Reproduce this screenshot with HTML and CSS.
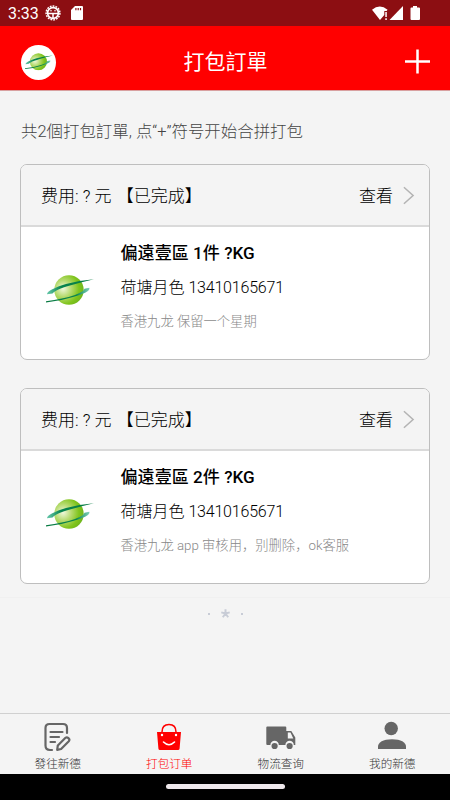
FILE: index.html
```
<!DOCTYPE html>
<html lang="zh-CN">
<head>
<meta charset="utf-8">
<title>打包訂單</title>
<link rel="stylesheet" href="styles.css">
</head>
<body>
<svg class="defs" aria-hidden="true">
  <defs>
    <radialGradient id="ball" cx=".3" cy=".45" r=".72">
      <stop offset="0" stop-color="#f0f8dc"/>
      <stop offset=".4" stop-color="#b4da6c"/>
      <stop offset=".75" stop-color="#80c41c"/>
      <stop offset="1" stop-color="#6cb41c"/>
    </radialGradient>
    <linearGradient id="ringTop"><stop offset="0" stop-color="#68c8ac"/><stop offset=".3" stop-color="#08854f"/><stop offset="1" stop-color="#087a42"/></linearGradient>
    <linearGradient id="ringLow"><stop offset="0" stop-color="#087a42"/><stop offset=".7" stop-color="#08854f"/><stop offset="1" stop-color="#80d0bc"/></linearGradient>
    <symbol id="logo" viewBox="0 0 48 30">
      <circle cx="23" cy="15" r="14.700" fill="url(#ball)"/>
      <path d="M1 19.200C1 16 9 12.500 20 9Q33 5.500 48 4.200Q35 7.200 24 10.500C14 13.500 9 15.500 6.500 18.600Z" fill="url(#ringTop)"/>
      <path d="M0 26.300Q17 24 29 20Q38 16.500 38.500 13.800L43.300 12.800C45 16 36 19.500 27 22.100Q14 26.300 0 27.500Z" fill="url(#ringLow)"/>
    </symbol>
  </defs>
</svg>
<div class="screen">
  <div class="status">
    <span class="time">3:33</span>
    <svg class="gear" viewBox="0 0 16 16">
      <circle cx="8" cy="8" r="6.900" fill="none" stroke="#fff" stroke-width="1.500" stroke-dasharray="1.800 1.100"/>
      <circle cx="8" cy="8" r="5.400" fill="none" stroke="#fff" stroke-width="1.700"/>
      <path d="M3 8.500H13M8 8.500V13" stroke="#fff" stroke-width="1.500"/>
      <circle cx="6" cy="5.800" r=".8" fill="#fff"/><circle cx="10" cy="5.800" r=".8" fill="#fff"/>
    </svg>
    <svg class="sd" viewBox="0 0 12 14"><path fill="#fff" fill-rule="evenodd" d="M4 0H11Q12 0 12 1V13Q12 14 11 14H1Q0 14 0 13V4ZM4.300 2V4.300H5.500V2ZM6.600 2V4.300H7.800V2ZM8.900 2V4.300H10.100V2Z"/></svg>
    <svg class="signals" viewBox="0 0 48 15">
      <path fill="#fff" d="M0 3.800Q7.800-2.800 15.600 3.800L14.600 5H12.300V9L8 14Z"/>
      <path fill="#fff" d="M13.300 6H14.800V11H13.300ZM13.300 12.300H14.800V14H13.300Z"/>
      <path fill="#fff" d="M31 0V14H17.500Z"/>
      <path fill="#fff" d="M41 0H45V1.500H47Q48 1.500 48 2.500V13Q48 14 47 14H39.500Q38.500 14 38.500 13V2.500Q38.500 1.500 39.500 1.500H41Z"/>
    </svg>
  </div>
  <header class="header">
    <span class="avatar"><svg class="avatar-logo"><use href="#logo"/></svg></span>
    <h1>打包訂單</h1>
    <svg class="plus" viewBox="0 0 25 25"><path d="M0 12.500H25M12.500 .5V24.500" stroke="#fff" stroke-width="2.500"/></svg>
  </header>
  <main class="content">
    <p class="notice">共2個打包訂單, 点“+”符号开始合拼打包</p>
    <section class="card">
      <div class="card-head">
        <span class="fee">费用: ? 元 <span class="state">【已完成】</span></span>
        <span class="view">查看</span>
        <svg class="chevron" viewBox="0 0 12 20"><path d="M1 1L11 10L1 19" fill="none" stroke="#b4b4b4" stroke-width="1.700"/></svg>
      </div>
      <div class="card-body">
        <svg class="logo"><use href="#logo"/></svg>
        <div class="info">
          <h2>偏遠壹區 1件 ?KG</h2>
          <p class="person">荷塘月色 <span class="phone">13410165671</span></p>
          <p class="address">香港九龙 保留一个星期</p>
        </div>
      </div>
    </section>
    <section class="card">
      <div class="card-head">
        <span class="fee">费用: ? 元 <span class="state">【已完成】</span></span>
        <span class="view">查看</span>
        <svg class="chevron" viewBox="0 0 12 20"><path d="M1 1L11 10L1 19" fill="none" stroke="#b4b4b4" stroke-width="1.700"/></svg>
      </div>
      <div class="card-body">
        <svg class="logo"><use href="#logo"/></svg>
        <div class="info">
          <h2>偏遠壹區 2件 ?KG</h2>
          <p class="person">荷塘月色 <span class="phone">13410165671</span></p>
          <p class="address">香港九龙 app 审核用，别删除，ok客服</p>
        </div>
      </div>
    </section>
    <div class="end"><i></i><svg viewBox="0 0 10 10"><path d="M5 5V.3M5 5L9.700 3.700M5 5L8 9.200M5 5L2 9.200M5 5L.3 3.700" stroke="#c8ccd6" stroke-width="2.200"/></svg><i></i></div>
  </main>
  <nav class="tabs">
    <a class="tab">
      <svg viewBox="0 0 28 28" fill="none" stroke="#666" stroke-width="2.200" stroke-linecap="round" stroke-linejoin="round">
        <path d="M8 27H6Q1.500 27 1.500 22.500V5Q1.500 1 5.500 1H19Q23 1 23 5V10"/>
        <path d="M6.500 9H18.500M6.500 14H15M6.500 19H11"/>
        <path d="M13.200 26.800L13.800 22.500L21.500 14.800Q22.800 13.700 24.100 14.900L24.800 15.600Q26 16.900 24.800 18.200L17.100 26Z"/>
      </svg>
      <span>發往新德</span>
    </a>
    <a class="tab active">
      <svg viewBox="0 0 28 28"><path fill="red" d="M2 9H26L24.600 25.500Q24.500 27 23 27H5Q3.500 27 3.400 25.500Z"/><path d="M7 12V9Q7 1.500 14 1.500T21 9V12" fill="none" stroke="red" stroke-width="1.500"/><circle cx="7" cy="12" r="1.200" fill="#fff"/><circle cx="21" cy="12" r="1.200" fill="#fff"/><path d="M8.500 19Q14 24.500 19.500 19" fill="none" stroke="#fff" stroke-width="1.600" stroke-linecap="round"/></svg>
      <span>打包订单</span>
    </a>
    <a class="tab">
      <svg viewBox="0 0 28 28"><path fill="#666" fill-rule="evenodd" d="M.3 3.500H18.300Q19.300 3.500 19.300 4.500V8H24.300L28.300 14.500V22H26.800A4.200 4.200 0 0 0 18.400 22H11.800A4.200 4.200 0 0 0 3.400 22H.3Q-.7 22 -.7 21V4.500Q-.7 3.500 .3 3.500ZM20.800 9.500V15.500H26.300L23.500 9.500Z"/><circle cx="7.600" cy="23" r="3.100" fill="#666"/><circle cx="22.600" cy="23" r="3.100" fill="#666"/></svg>
      <span>物流查询</span>
    </a>
    <a class="tab">
      <svg viewBox="0 0 28 28"><circle cx="13.200" cy="5.500" r="6.700" fill="#666"/><path fill="#666" d="M0 26V23.500C0 19.500 5 16.300 14 16.300S28 19.500 28 23.500V26Z"/></svg>
      <span>我的新德</span>
    </a>
  </nav>
  <div class="system"><span class="pill"></span></div>
</div>
</body>
</html>
```

FILE: styles.css
```
* { box-sizing: border-box; margin: 0; padding: 0; }
body { width: 450px; height: 800px; overflow: hidden; background: #f4f4f4; font-family: Roboto, "Noto Sans CJK SC", sans-serif; font-weight: 300; color: #000; }
svg { display: block; overflow: visible; flex: none; }
.defs { position: absolute; width: 0; height: 0; }
.screen { display: flex; flex-direction: column; height: 800px; }
.status { height: 26px; background: #8c0e12; display: flex; align-items: center; padding: 0 30px 0 8px; color: #fff; }
.time { font-size: 16px; font-weight: 400; line-height: 26px; width: 37px; margin-top: 2px; }
.gear { width: 16px; height: 16px; }
.sd { width: 12px; height: 14px; margin-left: 10px; }
.signals { width: 48px; height: 15px; margin-left: auto; }
.header { height: 65px; background: #f00; border-bottom: 1px solid #d8a0a0; display: flex; align-items: center; justify-content: space-between; padding: 8px 20px 0 21px; color: #fff; }
.avatar { width: 35px; height: 35px; border-radius: 50%; background: #fff; display: flex; align-items: center; justify-content: center; }
.avatar-logo { width: 28px; height: 17.500px; }
.header h1 { font-size: 21px; font-weight: 400; line-height: 30px; padding-right: 10px; }
.plus { width: 25px; height: 25px; margin-top: -1px; }
.content { flex: 1; padding: 29px 20px 0; }
.notice { font-size: 16.450px; line-height: 24px; color: #444; padding-left: 1px; margin-bottom: 20px; white-space: nowrap; }
.card { height: 196px; border: 1px solid #bebebe; border-radius: 7px; background: #fff; overflow: hidden; margin-bottom: 28px; }
.card-head { height: 62px; background: #f4f4f4; border-bottom: 2px solid #dadada; display: flex; align-items: center; padding: 0 15px 0 20px; font-size: 17px; line-height: 24px; white-space: nowrap; }
.fee { margin-right: auto; }
.fee, .view { padding-top: 1px; }
.state { margin-left: 1px; }
.chevron { width: 11px; height: 19px; margin-left: 10px; }
.card-body { display: flex; padding: 14px 20px 0 25px; }
.logo { width: 48px; height: 30px; margin-top: 34px; }
.info { margin-left: 26.500px; white-space: nowrap; }
.info h2 { font-size: 17.100px; font-weight: 500; line-height: 24px; }
.person { font-size: 16px; line-height: 24px; margin-top: 11px; }
.phone { letter-spacing: -.2px; }
.address { font-size: 13.300px; line-height: 20px; margin-top: 12px; color: #888; }
.end { margin: -15px -20px 0; border-top: 1px solid #f0f0f0; height: 32px; display: flex; align-items: center; justify-content: center; gap: 11px; }
.end i { width: 2px; height: 2px; background: #c8ccd6; }
.end svg { width: 9px; height: 9px; }
.tabs { height: 61px; border-top: 1px solid #d0d0d0; display: flex; padding: 9px 2px 0; }
.tab { flex: 1; display: flex; flex-direction: column; align-items: center; font-size: 11.600px; color: #333; }
.tab svg { width: 28px; height: 28px; }
.tab span { line-height: 16px; margin-top: 5px; }
.tab.active { color: #f00; }
.system { height: 26px; background: #000; display: flex; justify-content: center; padding-top: 10px; }
.pill { width: 119px; height: 5px; border-radius: 3px; background: #eee8ec; }
```
